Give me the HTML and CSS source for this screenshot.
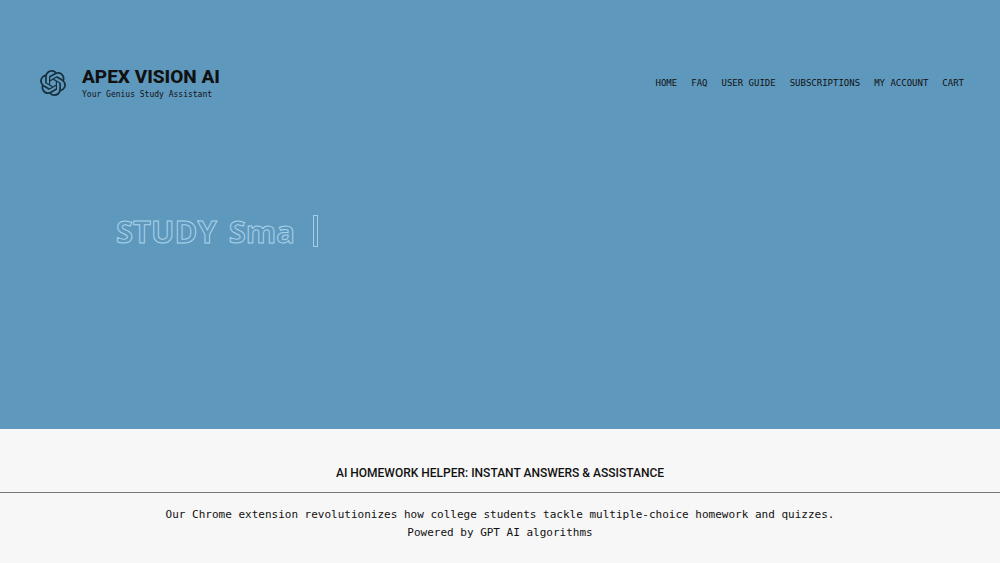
FILE: index.html
```html
<!DOCTYPE html>
<html lang="en">
<head>
<meta charset="utf-8">
<meta name="viewport" content="width=device-width, initial-scale=1">
<title>Apex Vision AI</title>
<link rel="stylesheet" href="styles.css">
</head>
<body>
<div class="hero">
  <header class="header">
    <a class="brand" href="#">
      <svg class="logo" viewBox="0 0 24 24" aria-hidden="true"><path d="M22.28 9.82a5.98 5.98 0 0 0-.52-4.91 6.05 6.05 0 0 0-6.51-2.9A6.07 6.07 0 0 0 4.98 4.18a5.98 5.98 0 0 0-4 2.9 6.05 6.05 0 0 0 .74 7.1 5.98 5.98 0 0 0 .51 4.91 6.05 6.05 0 0 0 6.52 2.9A5.98 5.98 0 0 0 13.26 24a6.06 6.06 0 0 0 5.77-4.21 5.99 5.99 0 0 0 4-2.9 6.06 6.06 0 0 0-.75-7.07zm-9.02 12.61a4.48 4.48 0 0 1-2.88-1.04l.14-.08 4.78-2.76a.79.79 0 0 0 .39-.68v-6.74l2.02 1.17a.07.07 0 0 1 .04.05v5.58a4.5 4.5 0 0 1-4.49 4.5zM3.6 18.3a4.47 4.47 0 0 1-.54-3.01l.14.09 4.78 2.76a.77.77 0 0 0 .78 0l5.85-3.37v2.33a.08.08 0 0 1-.04.06L9.74 19.95a4.5 4.5 0 0 1-6.14-1.65zM2.34 7.9a4.49 4.49 0 0 1 2.37-1.98V11.6a.77.77 0 0 0 .39.68l5.81 3.35-2.02 1.17a.08.08 0 0 1-.07 0l-4.83-2.79A4.5 4.5 0 0 1 2.34 7.9zm16.6 3.85-5.84-3.38 2.02-1.16a.08.08 0 0 1 .07 0l4.83 2.79a4.49 4.49 0 0 1-.68 8.1v-5.68a.79.79 0 0 0-.4-.67zm2.01-3.02-.14-.09-4.77-2.78a.78.78 0 0 0-.79 0L9.41 9.23V6.9a.07.07 0 0 1 .03-.06l4.83-2.79a4.5 4.5 0 0 1 6.68 4.68zM8.31 12.86l-2.02-1.16a.08.08 0 0 1-.04-.06V6.07a4.5 4.5 0 0 1 7.37-3.45l-.14.08L8.7 5.46a.79.79 0 0 0-.39.68zm1.09-2.36L12 9l2.61 1.5v3L12 15l-2.6-1.5z"/></svg>
      <span class="brand-text">
        <span class="brand-name">APEX VISION AI</span>
        <span class="tagline">Your Genius Study Assistant</span>
      </span>
    </a>
    <nav class="nav">
      <a href="#">HOME</a>
      <a href="#">FAQ</a>
      <a href="#">USER GUIDE</a>
      <a href="#">SUBSCRIPTIONS</a>
      <a href="#">MY ACCOUNT</a>
      <a href="#">CART</a>
    </nav>
  </header>
  <h1 class="typed"><span>STUDY</span><span>Sma</span><span class="caret"></span></h1>
</div>
<main class="intro">
  <h2 class="intro-title">AI HOMEWORK HELPER: INSTANT ANSWERS &amp; ASSISTANCE</h2>
  <p class="intro-text">Our Chrome extension revolutionizes how college students tackle multiple-choice homework and quizzes.<br>Powered by GPT AI algorithms</p>
</main>
</body>
</html>
```
FILE: styles.css
```css
* {
  box-sizing: border-box;
}

body {
  margin: 0;
  background: #f7f7f7;
  color: #111;
  font-family: "DejaVu Sans Mono", "Liberation Mono", monospace;
}

a {
  color: inherit;
  text-decoration: none;
}

.hero {
  min-height: 429px;
  padding: 65px 36px 0 40px;
  background: #5f98bd;
}

.header {
  display: flex;
  align-items: center;
  justify-content: space-between;
}

.brand {
  display: flex;
  align-items: center;
  gap: 16px;
}

.logo {
  width: 26px;
  height: 26px;
  fill: #18303e;
}

.brand-text {
  display: flex;
  flex-direction: column;
}

.brand-name {
  font: 800 19px/24px Roboto, sans-serif;
}

.tagline {
  font-size: 8px;
  line-height: 12px;
}

.nav {
  display: flex;
  gap: 14px;
  font-size: 9px;
  line-height: 18px;
}

.typed {
  display: flex;
  align-items: center;
  gap: 12px;
  margin: 108px 0 0 76px;
  font: 700 31px/44px "Open Sans", sans-serif;
  color: #5f98bd;
  -webkit-text-stroke: 1px #a9d3e9;
}

.caret {
  width: 5px;
  height: 32px;
  margin-left: 6px;
  border: 1px solid #a5cde4;
}

.intro {
  padding-top: 34px;
  text-align: center;
}

.intro-title {
  margin: 0;
  padding-bottom: 9px;
  border-bottom: 1px solid #777;
  font: 500 12px/20px Roboto, sans-serif;
}

.intro-text {
  margin: 0;
  padding: 13px 16px;
  font-size: 11px;
  line-height: 18px;
}
```
